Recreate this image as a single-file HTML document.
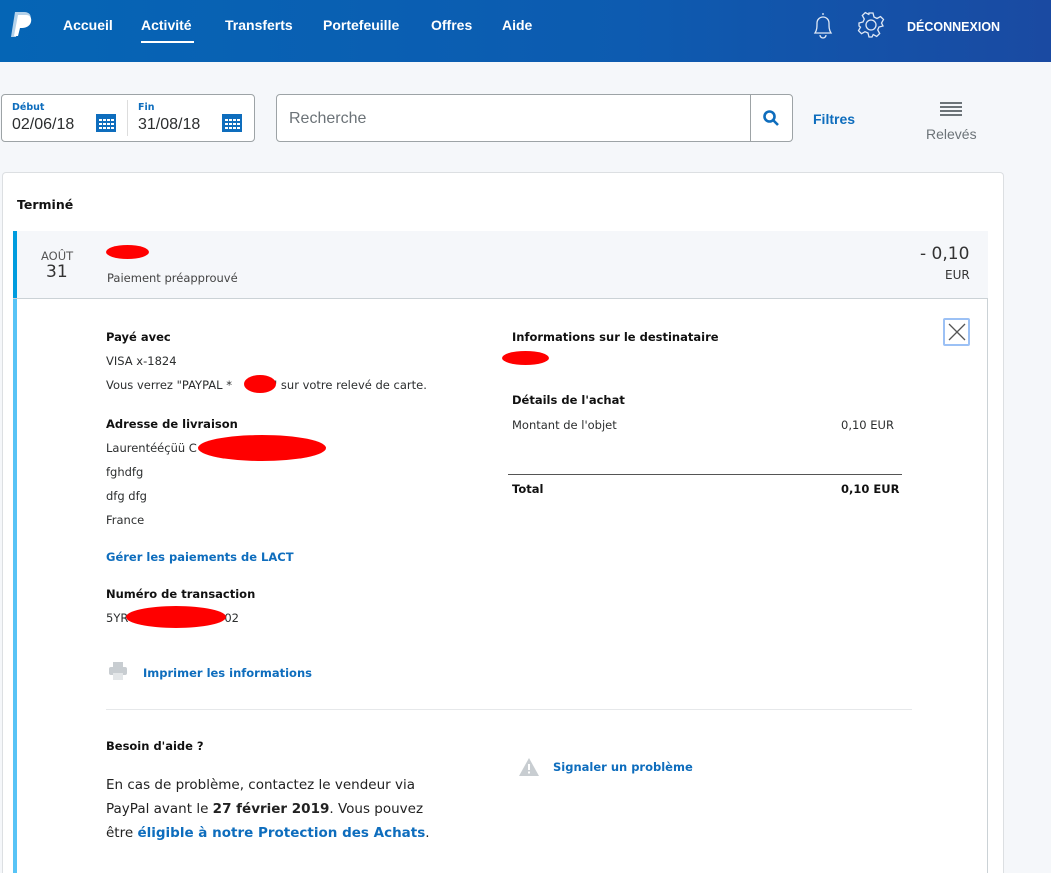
<!DOCTYPE html>
<html style="height:873px;overflow:hidden"><head><meta charset="utf-8"><style>
*{box-sizing:border-box;margin:0;padding:0}
body{width:1051px;height:873px;overflow:hidden;background:#f5f7fa;font-family:"DejaVu Sans","Liberation Sans",sans-serif;color:#2c2e2f;position:relative}
.a{position:absolute;white-space:nowrap}
.nav{position:absolute;left:0;top:0;width:1051px;height:62px;background:linear-gradient(90deg,#0565b5,#0d5bb0 60%,#1a4aa2)}
.nl{position:absolute;top:17px;color:#fff;font-size:14px;font-family:"Liberation Sans",sans-serif;font-weight:bold}
.red{position:absolute;background:#f00;border-radius:50%}
.b{font-weight:bold;font-size:11.5px;color:#111}
.t{font-size:11.5px;color:#2c2e2f}
.lk{color:#0e6dbd;font-weight:bold;font-size:11.5px}
</style></head><body>
<div class="nav"></div>
<svg class="a" style="left:10px;top:11px" width="24" height="28" viewBox="0 0 24 28"><path d="M5 1h9c6 0 8 4 6 9s-6 7-10 7H8l-2 9H1z" fill="#fff" opacity=".7"/><path d="M8 4h8c4 0 6 3 5 7s-5 6-9 6h-2l-2 8H4z" fill="#fff"/></svg>
<div class="nl" style="left:63px">Accueil</div>
<div class="nl" style="left:141px">Activité</div>
<div class="a" style="left:141px;top:41px;width:53px;height:2px;background:#fff"></div>
<div class="nl" style="left:225px">Transferts</div>
<div class="nl" style="left:323px">Portefeuille</div>
<div class="nl" style="left:431px">Offres</div>
<div class="nl" style="left:502px">Aide</div>
<svg class="a" style="left:810px;top:11px" width="26" height="28" viewBox="0 0 26 28" fill="none" stroke="#dfe8f5" stroke-width="1.3"><path d="M13 2v2M5 22c2-3 2-6 2-10a6 6 0 0 1 12 0c0 4 0 7 2 10zM10 24a3 3 0 0 0 6 0"/></svg>
<svg class="a" style="left:857px;top:11px" width="28" height="28" viewBox="0 0 28 28" fill="none" stroke="#dfe8f5" stroke-width="1.3"><path d="M12 2h4l1 4 3 1.5 3.5-2 3 3-2 3.5L26 15l-4 1-1.3 3 2 3.5-3 3-3.5-2L15 26h-3l-1-4-3-1.3-3.5 2-3-3 2-3.5L2 15v-3l4-1 1.3-3-2-3.5 3-3 3.5 2L12 3z"/><circle cx="14" cy="14" r="5"/></svg>
<div class="a" style="left:907px;top:20px;color:#fff;font-size:12.5px;font-weight:bold;font-family:'Liberation Sans',sans-serif">DÉCONNEXION</div>

<div class="a" style="left:1px;top:94px;width:254px;height:48px;background:#fff;border:1px solid #9da3a6;border-radius:4px"></div>
<div class="a" style="left:127px;top:100px;width:1px;height:36px;background:#ddd"></div>
<div class="a" style="left:12px;top:102px;font-size:9.5px;color:#0e6dbd;font-weight:bold">Début</div>
<div class="a" style="left:12px;top:116px;font-size:16px;font-family:'Liberation Sans',sans-serif">02/06/18</div>
<div class="a" style="left:138px;top:102px;font-size:9.5px;color:#0e6dbd;font-weight:bold">Fin</div>
<div class="a" style="left:138px;top:116px;font-size:16px;font-family:'Liberation Sans',sans-serif">31/08/18</div>
<svg class="a" style="left:96px;top:112px" width="20" height="20" viewBox="0 0 20 20"><rect x="0" y="2" width="20" height="18" fill="#0e6dbd"/><g fill="#fff"><rect x="3" y="7" width="3" height="2"/><rect x="7" y="7" width="3" height="2"/><rect x="11" y="7" width="3" height="2"/><rect x="15" y="7" width="3" height="2"/><rect x="3" y="11" width="3" height="2"/><rect x="7" y="11" width="3" height="2"/><rect x="11" y="11" width="3" height="2"/><rect x="15" y="11" width="3" height="2"/><rect x="3" y="15" width="3" height="2"/><rect x="7" y="15" width="3" height="2"/><rect x="11" y="15" width="3" height="2"/><rect x="15" y="15" width="3" height="2"/></g></svg>
<svg class="a" style="left:222px;top:112px" width="20" height="20" viewBox="0 0 20 20"><rect x="0" y="2" width="20" height="18" fill="#0e6dbd"/><g fill="#fff"><rect x="3" y="7" width="3" height="2"/><rect x="7" y="7" width="3" height="2"/><rect x="11" y="7" width="3" height="2"/><rect x="15" y="7" width="3" height="2"/><rect x="3" y="11" width="3" height="2"/><rect x="7" y="11" width="3" height="2"/><rect x="11" y="11" width="3" height="2"/><rect x="15" y="11" width="3" height="2"/><rect x="3" y="15" width="3" height="2"/><rect x="7" y="15" width="3" height="2"/><rect x="11" y="15" width="3" height="2"/><rect x="15" y="15" width="3" height="2"/></g></svg>

<div class="a" style="left:276px;top:94px;width:517px;height:48px;background:#fff;border:1px solid #9da3a6;border-radius:4px"></div>
<div class="a" style="left:750px;top:95px;width:1px;height:46px;background:#9da3a6"></div>
<div class="a" style="left:289px;top:110px;font-size:16px;color:#6c7378;font-family:'Liberation Sans',sans-serif">Recherche</div>
<svg class="a" style="left:762px;top:109px" width="18" height="18" viewBox="0 0 18 18" fill="none" stroke="#0e6dbd" stroke-width="2.6"><circle cx="7.5" cy="7.5" r="5"/><path d="M11 11l5 5"/></svg>
<div class="a" style="left:813px;top:111px;font-size:14px;font-weight:bold;color:#0e6dbd;font-family:'Liberation Sans',sans-serif">Filtres</div>
<div class="a" style="left:940px;top:102px;width:22px;height:2px;background:#6c7378;box-shadow:0 4px 0 #6c7378,0 8px 0 #6c7378,0 12px 0 #6c7378"></div>
<div class="a" style="left:926px;top:126px;font-size:14px;color:#6c7378;font-family:'Liberation Sans',sans-serif">Relevés</div>

<div class="a" style="left:2px;top:172px;width:1002px;height:701px;background:#fff;border:1px solid #dcdfe2;border-bottom:none;border-radius:4px 4px 0 0"></div>
<div class="a" style="left:17px;top:197px;font-size:12.5px;font-weight:bold;color:#111">Terminé</div>
<div class="a" style="left:13px;top:231px;width:975px;height:68px;background:#f5f7fa;border-bottom:1px solid #cbd2d6"></div>
<div class="a" style="left:13px;top:231px;width:4px;height:67px;background:#009cde"></div>
<div class="a" style="left:13px;top:299px;width:4px;height:574px;background:#58c4f6"></div>
<div class="a" style="left:987px;top:299px;width:1px;height:574px;background:#cbd2d6"></div>
<div class="a" style="left:41px;top:249px;font-size:11.5px;color:#555">AOÛT</div>
<div class="a" style="left:46px;top:262px;font-size:17px;color:#333">31</div>
<div class="red" style="left:106px;top:245px;width:43px;height:14px"></div>
<div class="a" style="left:107px;top:271px;font-size:11.5px;color:#444">Paiement préapprouvé</div>
<div class="a" style="left:920px;top:244px;font-size:17px;color:#333">- 0,10</div>
<div class="a" style="left:945px;top:268px;font-size:12px;color:#333">EUR</div>

<div class="a b" style="left:106px;top:330px">Payé avec</div>
<div class="a t" style="left:106px;top:354px">VISA x-1824</div>
<div class="a t" style="left:106px;top:378px">Vous verrez "PAYPAL *<span style="display:inline-block;width:40px"></span>" sur votre relevé de carte.</div>
<div class="red" style="left:244px;top:375px;width:32px;height:18px"></div>
<div class="a b" style="left:106px;top:417px">Adresse de livraison</div>
<div class="a t" style="left:106px;top:441px">Laurentééçüü C</div>
<div class="red" style="left:198px;top:435px;width:128px;height:26px"></div>
<div class="a t" style="left:106px;top:465px">fghdfg</div>
<div class="a t" style="left:106px;top:489px">dfg dfg</div>
<div class="a t" style="left:106px;top:513px">France</div>
<div class="a lk" style="left:106px;top:550px">Gérer les paiements de LACT</div>
<div class="a b" style="left:106px;top:587px">Numéro de transaction</div>
<div class="a t" style="left:106px;top:611px">5YR<span style="display:inline-block;width:96px"></span>02</div>
<div class="red" style="left:126px;top:606px;width:100px;height:22px"></div>
<svg class="a" style="left:109px;top:662px" width="18" height="18" viewBox="0 0 18 18" fill="#c8cdd1"><rect x="4" y="0" width="10" height="5"/><rect x="0" y="5" width="18" height="8" rx="2"/><rect x="4" y="11" width="10" height="7" fill="#e3e6e8"/></svg>
<div class="a lk" style="left:143px;top:666px">Imprimer les informations</div>
<div class="a" style="left:106px;top:709px;width:806px;height:1px;background:#e6e8ea"></div>
<div class="a b" style="left:106px;top:739px">Besoin d'aide ?</div>
<div class="a" style="left:106px;top:773px;font-size:13.5px;line-height:24px;white-space:normal;width:340px;color:#222">En cas de problème, contactez le vendeur via PayPal avant le <b>27 février 2019</b>. Vous pouvez être <span style="color:#0e6dbd;font-weight:bold">éligible à notre Protection des Achats</span>.</div>
<svg class="a" style="left:519px;top:758px" width="20" height="18" viewBox="0 0 20 18"><path d="M10 0L20 18H0z" fill="#c8cdd1"/><rect x="9" y="6" width="2" height="6" fill="#fff"/><rect x="9" y="13.5" width="2" height="2" fill="#fff"/></svg>
<div class="a lk" style="left:553px;top:760px">Signaler un problème</div>

<div class="a b" style="left:512px;top:330px">Informations sur le destinataire</div>
<div class="red" style="left:502px;top:351px;width:47px;height:14px"></div>
<div class="a b" style="left:512px;top:393px">Détails de l'achat</div>
<div class="a t" style="left:512px;top:418px">Montant de l'objet</div>
<div class="a t" style="left:841px;top:418px">0,10 EUR</div>
<div class="a" style="left:508px;top:474px;width:394px;height:1px;background:#555"></div>
<div class="a b" style="left:512px;top:482px">Total</div>
<div class="a b" style="left:841px;top:482px">0,10 EUR</div>
<div class="a" style="left:943px;top:318px;width:27px;height:28px;border:2px solid #9cc1f5;border-radius:2px"></div>
<svg class="a" style="left:947px;top:322px" width="20" height="20" viewBox="0 0 20 20" stroke="#555" stroke-width="1.3"><path d="M2 2l16 16M18 2L2 18"/></svg>
</body></html>
